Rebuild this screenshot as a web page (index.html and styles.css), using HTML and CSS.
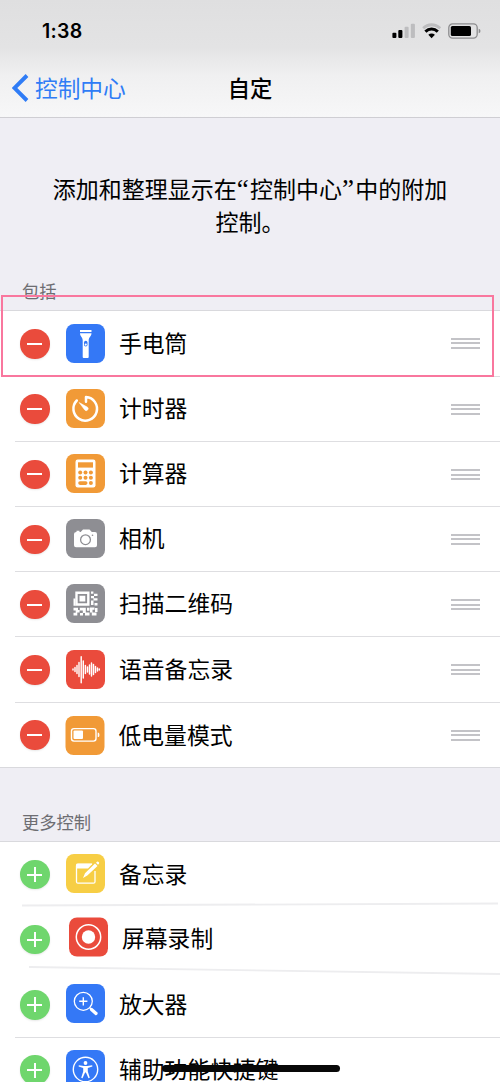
FILE: index.html
```html
<!DOCTYPE html>
<html lang="zh-CN">
<head>
<meta charset="utf-8">
<title>自定</title>
<link rel="stylesheet" href="styles.css">
</head>
<body>
<div class="screen">
  <header class="top">
    <div class="status">
      <span class="time">1:38</span>
      <svg class="status-icons" width="92" height="20" viewBox="0 0 92 20">
        <rect x="2.400" y="11.700" width="4" height="5.200" rx="1"/>
        <rect x="8.300" y="9" width="4.100" height="7.900" rx="1"/>
        <g fill="#bdbdbf"><rect x="14.600" y="5.800" width="4" height="11.100" rx="1"/><rect x="20.800" y="2.800" width="4.100" height="14.100" rx="1"/></g>
        <path d="M33.200 7.200C38 2.600 45 2.600 50.200 7.200" fill="none" stroke="#bdbdbf" stroke-width="2.800"/>
        <path d="M35.400 10.600C39 7.100 44.200 7.100 47.800 10.600" fill="none" stroke="#000" stroke-width="3"/>
        <path d="M38.300 13.700C40.200 12 43 12 44.900 13.700L41.600 17.200Z"/>
        <rect x="58.800" y="2.900" width="28.400" height="14.200" rx="3.800" fill="none" stroke="#8c8c8e" stroke-width="1.300"/>
        <rect x="60.800" y="5" width="20.200" height="10" rx="1.600"/>
        <path d="M88.700 7.700Q90.500 8.300 90.500 10T88.700 12.300Z" fill="#8c8c8e"/>
      </svg>
    </div>
    <nav class="nav">
      <a class="back"><svg width="17" height="28" viewBox="0 0 17 28"><path d="M15 1.500L2.400 14 15 26.500" fill="none" stroke="#2f7cf6" stroke-width="3.900"/></svg><span>控制中心</span></a>
      <h1 class="title">自定</h1>
    </nav>
  </header>
  <p class="intro">添加和整理显示在<span class="quote">“</span>控制中心<span class="quote">”</span>中的附加<br>控制。</p>
  <h2 class="section-title">包括</h2>
  <ul class="list included">
    <li class="row"><i class="toggle minus"></i>
      <svg class="icon blue" viewBox="0 0 39 39"><path d="M14 6h11.500v2H14zM14 9.200h11.500c0 3.300-2.800 3.800-2.800 7V33a1 1 0 0 1-1 1h-4a1 1 0 0 1-1-1V16.200c0-3.200-2.700-3.700-2.700-7z" fill="#fff"/><rect x="18" y="16.800" width="3.500" height="5.800" rx="1.750" fill="#3478f6"/><circle cx="19.750" cy="20.600" r="1.100" fill="#fff"/></svg>
      <span class="name">手电筒</span><i class="grip"></i></li>
    <li class="row"><i class="toggle minus"></i>
      <svg class="icon orange" viewBox="0 0 39 39"><path d="M10.800 11.500A11.800 11.800 0 1 0 20 8V12.800" fill="none" stroke="#fff" stroke-width="2.500" stroke-linecap="round" stroke-linejoin="round"/><path d="M13.200 13.600L21.600 18.300A1.900 1.900 0 0 1 18.800 21Z" fill="#fff" stroke="#fff" stroke-width=".6" stroke-linejoin="round"/></svg>
      <span class="name">计时器</span><i class="grip"></i></li>
    <li class="row"><i class="toggle minus"></i>
      <svg class="icon orange" viewBox="0 0 39 39"><rect x="9.500" y="5.500" width="20" height="28" rx="2.200" fill="#fff"/><g fill="#f19a37"><rect x="12" y="8.300" width="15" height="5.300"/><circle cx="14.200" cy="18.500" r="2"/><circle cx="19.500" cy="18.500" r="2"/><circle cx="24.900" cy="18.500" r="2"/><circle cx="14.200" cy="23.800" r="2"/><circle cx="19.500" cy="23.800" r="2"/><circle cx="24.900" cy="23.800" r="2"/><rect x="12.200" y="27.300" width="9.300" height="3.600" rx="1.800"/><circle cx="24.900" cy="29.100" r="2"/></g></svg>
      <span class="name">计算器</span><i class="grip"></i></li>
    <li class="row"><i class="toggle minus"></i>
      <svg class="icon gray" viewBox="0 0 39 39"><path d="M10.500 13v-1.300h3V13h1.200l2.300-2.400h6.500l2.300 2.400H29q2 0 2 2v11.200q0 2-2 2H10q-2 0-2-2V15q0-2 2.500-2z" fill="#fff"/><circle cx="19.500" cy="20.700" r="4.900" fill="none" stroke="#8e8e93" stroke-width="1.300"/><circle cx="26.500" cy="16.200" r=".8" fill="#8e8e93"/></svg>
      <span class="name">相机</span><i class="grip"></i></li>
    <li class="row"><i class="toggle minus"></i>
      <svg class="icon gray" viewBox="0 0 39 39"><g fill="#fff"><path fill-rule="evenodd" d="M9.300 7.500h14.200v14.200H9.300zM11.700 9.900v9.400h9.400V9.900z"/><path d="M13.500 11.700h5.800v5.800h-5.800zM25 7.500h2.400v2.200H25zM28 9.700h3.500V12H28zM25 12h3v2.300h-3zM27.500 14.300h4v2.300h-4zM25 16.600h2.500V21H25zM28.500 19h3v2.500h-3zM7.500 14.500h2v7.200h-2zM7.500 23.700h4.500v2.300h1.600v2.500h-2.300v3H7.500v-2.700h2.200v-2.300H7.500zM13.800 23.700h6v5.300h-3v-2.500h-3zM21 23.700h2.500v3H21zM14 29h3v2.500h-3zM19 28.500h4.500v3H19zM24 23.500h4.500v2.300h-2v2.700H24zM29 24h2.500v4H29zM25.800 28.500h4.700v3h-4.700z"/></g></svg>
      <span class="name">扫描二维码</span><i class="grip"></i></li>
    <li class="row"><i class="toggle minus"></i>
      <svg class="icon red" viewBox="0 0 39 39"><g stroke="#fff" stroke-width="1.450" stroke-linecap="round"><path d="M7 19v1M9 17.500v4M11 15.500v8M13 12.500v14M15.200 6.800v26M17.300 11v17M19.400 15.500v8M21.500 17v5M23.500 15v9M25.500 13v13M27.500 14.500v10M29.500 16.500v6M31.500 18v3M33.300 19v1"/></g></svg>
      <span class="name">语音备忘录</span><i class="grip"></i></li>
    <li class="row"><i class="toggle minus"></i>
      <div class="shift-power"><svg class="icon orange" viewBox="0 0 39 39"><rect x="6" y="12.600" width="24.500" height="12.500" rx="2.500" fill="none" stroke="#fff" stroke-width="1.400"/><rect x="8" y="14.600" width="9.500" height="8.500" rx="1" fill="#fff"/><path d="M32.200 16.600q1.800 0 1.800 2.300t-1.800 2.300z" fill="#fff"/></svg>
      <span class="name">低电量模式</span></div><i class="grip"></i></li>
  </ul>
  <h2 class="section-title more-title">更多控制</h2>
  <ul class="list more">
    <li class="row"><i class="toggle plus"></i>
      <svg class="icon yellow" viewBox="0 0 39 39"><path d="M26 10.200H12q-1.500 0-1.500 1.500v16q0 1.500 1.500 1.500h15.500q1.500 0 1.500-1.500V17" fill="none" stroke="#fff" stroke-width="1.300"/><path d="M10.500 9.800h16l-4.500 4.700H10.500z" fill="#fff"/><path d="M17 24l2-4.800L29 9.500l2.500 2.400-10.200 9.700zM30 8.700l1-1q.8-.6 1.700.3t.3 1.700l-1 1z" fill="#fff"/></svg>
      <span class="name">备忘录</span></li>
    <li class="row"><i class="toggle plus"></i>
      <div class="shift-record"><svg class="icon red" viewBox="0 0 39 39"><circle cx="19.500" cy="19.500" r="12.200" fill="none" stroke="#fff" stroke-width="1.500"/><circle cx="19.500" cy="19.500" r="6.700" fill="#fff"/></svg>
      <span class="name">屏幕录制</span></div></li>
    <li class="row"><i class="toggle plus"></i>
      <svg class="icon blue" viewBox="0 0 39 39"><g fill="none" stroke="#fff"><circle cx="17.300" cy="17.300" r="9" stroke-width="1.300"/><path d="M17.300 13.200v8.200M13.200 17.300h8.200" stroke-width="1.400"/><path d="M23.800 23.800l1.700 1.700" stroke-width="1.500"/><path d="M25.500 25.500l4.500 4" stroke-width="3.300" stroke-linecap="round"/></g></svg>
      <span class="name">放大器</span></li>
    <li class="row"><i class="toggle plus"></i>
      <svg class="icon blue" viewBox="0 0 39 39"><circle cx="19.500" cy="19.500" r="12.200" fill="none" stroke="#fff" stroke-width="1.400"/><g fill="#fff"><circle cx="19.500" cy="13" r="1.900"/><path d="M12.800 15.200l5 .7h3.400l5-.7.2 1.200-4.600 1.500v3.600l2 6.300-1.300.5-2.600-5.800h-.8l-2.600 5.800-1.300-.5 2-6.300v-3.600l-4.600-1.500z"/></g></svg>
      <span class="name">辅助功能快捷键</span></li>
  </ul>
  <svg class="slanted" width="500" height="80" viewBox="0 0 500 80"><path d="M22 6.500L498 4.500M29 68L500 75" fill="none" stroke="#ededef" stroke-width="1.800"/></svg>
  <div class="highlight"></div>
  <div class="home-bar"></div>
</div>
</body>
</html>
```
FILE: styles.css
```css
* { box-sizing: border-box; }
body { margin: 0; background: #efeef4; }
.screen {
  position: relative;
  width: 500px;
  height: 1082px;
  overflow: hidden;
  background: #efeef4;
  color: #000;
  font-family: "Noto Sans CJK SC", sans-serif;
}
.top {
  height: 118px;
  border-bottom: 1px solid #cfced3;
  background: linear-gradient(#dfdfe0 0, #e3e3e4 40%, #f0f0f1 65%, #f7f7f8 100%);
}
.status {
  display: flex;
  justify-content: space-between;
  align-items: center;
  height: 62px;
  padding: 0 18px 0 42px;
}
.time { font: 600 19.500px/24px Inter, sans-serif; letter-spacing: .3px; }
.nav {
  display: grid;
  grid-template-columns: 1fr auto 1fr;
  align-items: center;
  height: 51px;
  padding-left: 12px;
  padding-right: 12px;
}
.back { display: flex; align-items: center; gap: 6px; color: #2f7cf6; font-size: 22.700px; line-height: 30px; }
.title { margin: -1px 0 0; font-size: 22.300px; font-weight: 500; line-height: 30px; }
.intro { margin: 0; padding-top: 54px; height: 161px; text-align: center; font-size: 23px; line-height: 32.500px; white-space: nowrap; }
.quote { font-family: "Liberation Serif", serif; font-size: 27px; line-height: 1; letter-spacing: 1.200px; }
.section-title { margin: 0; height: 31px; padding-left: 22px; color: #6d6d72; font-size: 17.300px; font-weight: 400; line-height: 24px; }
.list { margin: 0; padding: 0; list-style: none; background: #fff; border-top: 1px solid #d9d9dd; }
.included { border-bottom: 1px solid #d9d9dd; }
.more-title { height: 72.600px; padding-top: 41.500px; }
.row { position: relative; display: flex; align-items: center; height: 65.200px; padding: 0 20px 2px; }
.included .row { padding-bottom: .8px; }
.row + .row::before { content: ""; position: absolute; left: 15px; right: 0; top: -.5px; border-top: 1px solid #dedee1; }
.more .row:nth-child(2)::before, .more .row:nth-child(3)::before { display: none; }
.toggle {
  flex: none;
  width: 29.500px;
  height: 29.500px;
  margin: 2px 16px 0 0;
  border-radius: 50%;
  box-shadow: 0 1px 2px #00000018;
}
.included .toggle { margin-top: 1.500px; }
.minus { background: linear-gradient(#fff, #fff) center / 15px 2px no-repeat #ea4b3c; }
.plus { background: linear-gradient(#fff, #fff) center / 15px 2px no-repeat, linear-gradient(#fff, #fff) center / 2px 15px no-repeat #6fd66d; }
.icon { flex: none; width: 39px; height: 39px; border-radius: 8px; }
.blue { background: #3478f6; }
.orange { background: #f19a37; }
.gray { background: #8e8e93; }
.red { background: #ea4b3c; }
.yellow { background: #f7ce45; }
.name { margin-left: 14.500px; font-size: 22.800px; line-height: 32px; white-space: nowrap; }
.included .name { margin-top: -1px; }
.grip { width: 29px; height: 11px; margin-left: auto; margin-top: 1.500px; background: repeating-linear-gradient(#c3c3c7 0 2px, transparent 2px 4.500px); }
.shift-power, .shift-record { display: flex; align-items: center; }
.shift-power { transform: translate(-.5px, 1px); }
.shift-record { transform: translate(3px, -1.500px); }
.slanted { position: absolute; left: 0; top: 899px; }
.highlight { position: absolute; left: 1px; top: 295px; width: 493px; height: 82px; border: 2px solid #f9779e; }
.home-bar { position: absolute; left: 162px; top: 1065px; width: 178px; height: 6.500px; border-radius: 4px; background: #080808; }
```
